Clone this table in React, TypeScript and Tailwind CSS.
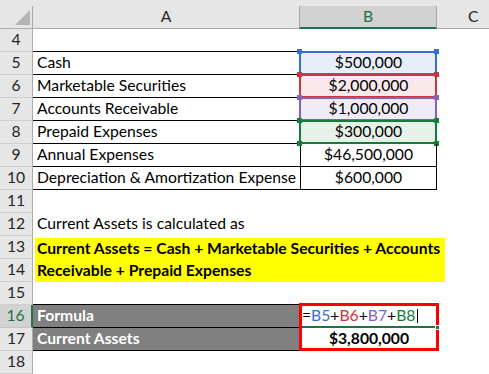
import React from "react";

const BLK = "border-b border-b-black";
const NONE = "border-b border-b-transparent";

function RH({ n, active }: { n: number; active?: boolean }) {
  return active ? (
    <div className="w-[33px] shrink-0 h-[23px] flex items-center justify-center bg-[#d2d2d2] text-[#217346] border-b border-b-[#c4c4c4] border-r-2 border-r-[#217346]">
      {n}
    </div>
  ) : (
    <div className="w-[33px] shrink-0 h-[23px] flex items-center justify-center bg-[#e6e6e6] text-[#262626] border-b border-b-[#cfcfcf] border-r border-r-[#ababab]">
      {n}
    </div>
  );
}

function ColorBox({ color }: { color: string }) {
  return (
    <div
      className="absolute -top-px -left-[2px] -right-px -bottom-px border-2 pointer-events-none"
      style={{ borderColor: color }}
    >
      <div className="absolute -top-[4px] -left-[4px] w-[5px] h-[5px]" style={{ background: color }} />
      <div className="absolute -top-[4px] -right-[4px] w-[5px] h-[5px]" style={{ background: color }} />
      <div className="absolute -bottom-[4px] -left-[4px] w-[5px] h-[5px]" style={{ background: color }} />
      <div className="absolute -bottom-[4px] -right-[4px] w-[5px] h-[5px]" style={{ background: color }} />
    </div>
  );
}

const A_BASE = "w-[268px] shrink-0 h-[23px] pl-[4px] flex items-center whitespace-nowrap overflow-hidden";
const B_BASE = "w-[136px] shrink-0 h-[23px] flex items-center justify-center whitespace-nowrap relative";

function TableRow({
  n,
  label,
  value,
  bg,
  color,
}: {
  n: number;
  label: string;
  value: string;
  bg?: string;
  color?: string;
}) {
  return (
    <div className="flex h-[23px]">
      <RH n={n} />
      <div className={`${A_BASE} ${BLK} border-r border-r-black`}>{label}</div>
      <div className={`${B_BASE} ${BLK} border-r border-r-black`} style={bg ? { background: bg } : undefined}>
        {value}
        {color ? <ColorBox color={color} /> : null}
      </div>
      <div className={`flex-1 h-[23px] ${NONE}`} />
    </div>
  );
}

function PlainRow({ n, children }: { n: number; children?: React.ReactNode }) {
  return (
    <div className="flex h-[23px]">
      <RH n={n} />
      <div className={`flex-1 h-[23px] pl-[4px] flex items-center whitespace-nowrap ${NONE}`}>{children}</div>
    </div>
  );
}

const BLUE = "#3b6fcb";
const RED = "#c9363e";
const PURPLE = "#8461ba";
const GREEN = "#157a3a";

export default function App() {
  return (
    <div className="w-[489px] h-[374px] overflow-hidden bg-white text-black text-[15.7px] font-[Lato,'Liberation_Sans',sans-serif] leading-none">
      {/* column header */}
      <div className="flex items-end h-[29px] bg-[#e6e6e6]">
        <div className="w-[33px] shrink-0 h-[23px] relative border-r border-r-[#ababab] border-b border-b-[#ababab]">
          <svg className="absolute left-[15px] top-[4px]" width="15" height="15" viewBox="0 0 15 15">
            <polygon points="15,0 15,15 0,15" fill="#b4b4b4" />
          </svg>
        </div>
        <div className="w-[266px] shrink-0 h-[23px] flex items-center justify-center text-[#262626] border-b border-b-[#ababab]">
          A
        </div>
        <div className="w-[138px] shrink-0 h-[23px] flex items-center justify-center bg-[#d2d2d2] text-[#217346] border-x border-x-[#a6a6a6] border-b-2 border-b-[#217346]">
          B
        </div>
        <div className="flex-1 h-[23px] flex items-center pl-[31px] text-[#262626] border-b border-b-[#ababab]">
          C
        </div>
      </div>

      {/* row 4 */}
      <div className="flex h-[23px]">
        <RH n={4} />
        <div className={`${A_BASE} ${BLK}`} />
        <div className={`${B_BASE} ${BLK}`} />
        <div className={`flex-1 h-[23px] ${NONE}`} />
      </div>

      <TableRow n={5} label="Cash" value="$500,000" bg="#e8eef8" color={BLUE} />
      <TableRow n={6} label="Marketable Securities" value="$2,000,000" bg="#fae9ea" color={RED} />
      <TableRow n={7} label="Accounts Receivable" value="$1,000,000" bg="#f0ecf7" color={PURPLE} />
      <TableRow n={8} label="Prepaid Expenses" value="$300,000" bg="#e6f1e8" color={GREEN} />
      <TableRow n={9} label="Annual Expenses" value="$46,500,000" />
      <TableRow n={10} label="Depreciation & Amortization Expense" value="$600,000" />

      <PlainRow n={11} />
      <PlainRow n={12}>Current Assets is calculated as</PlainRow>

      {/* rows 13-14 */}
      <div className="flex h-[46px]">
        <div className="flex flex-col">
          <RH n={13} />
          <RH n={14} />
        </div>
        <div className="flex-1">
          <div className="ml-[2px] mt-[2px] w-[410px] h-[44px] bg-[#ffff00] font-bold pl-[2px] flex flex-col whitespace-nowrap">
            <div className="h-[21px] flex items-center">Current Assets = Cash + Marketable Securities + Accounts</div>
            <div className="h-[23px] flex items-center">Receivable + Prepaid Expenses</div>
          </div>
        </div>
      </div>

      {/* row 15 */}
      <div className="flex h-[23px]">
        <RH n={15} />
        <div className={`${A_BASE} ${BLK}`} />
        <div className={`${B_BASE} ${BLK}`} />
        <div className={`flex-1 h-[23px] ${NONE}`} />
      </div>

      {/* row 16 */}
      <div className="flex h-[23px]">
        <RH n={16} active />
        <div className={`${A_BASE} ${BLK} border-r border-r-black bg-[#808080] text-white font-bold`}>Formula</div>
        <div className={`w-[136px] shrink-0 h-[23px] relative flex items-center pl-[1px] whitespace-nowrap ${NONE}`}>
          <span>=</span>
          <span style={{ color: BLUE }}>B5</span>
          <span>+</span>
          <span style={{ color: RED }}>B6</span>
          <span>+</span>
          <span style={{ color: PURPLE }}>B7</span>
          <span>+</span>
          <span style={{ color: GREEN }}>B8</span>
          <span className="ml-[2px] w-px h-[14px] bg-black" />
          <div className="absolute -top-[2px] -left-[2px] w-[140px] h-[48px] border-[3px] border-[#ff0000] z-10 pointer-events-none" />
          <div className="absolute left-[1px] -right-px -bottom-px h-[2px] bg-[#217346] z-20" />
          <div className="absolute -right-[3px] -bottom-[3px] w-[5px] h-[5px] bg-[#217346] border border-white z-20" />
        </div>
        <div className={`flex-1 h-[23px] ${NONE}`} />
      </div>

      {/* row 17 */}
      <div className="flex h-[23px]">
        <RH n={17} />
        <div className={`${A_BASE} ${BLK} border-r border-r-black bg-[#808080] text-white font-bold`}>Current Assets</div>
        <div className={`${B_BASE} ${BLK} font-bold`}>$3,800,000</div>
        <div className={`flex-1 h-[23px] ${NONE}`} />
      </div>

      <PlainRow n={18} />
    </div>
  );
}
